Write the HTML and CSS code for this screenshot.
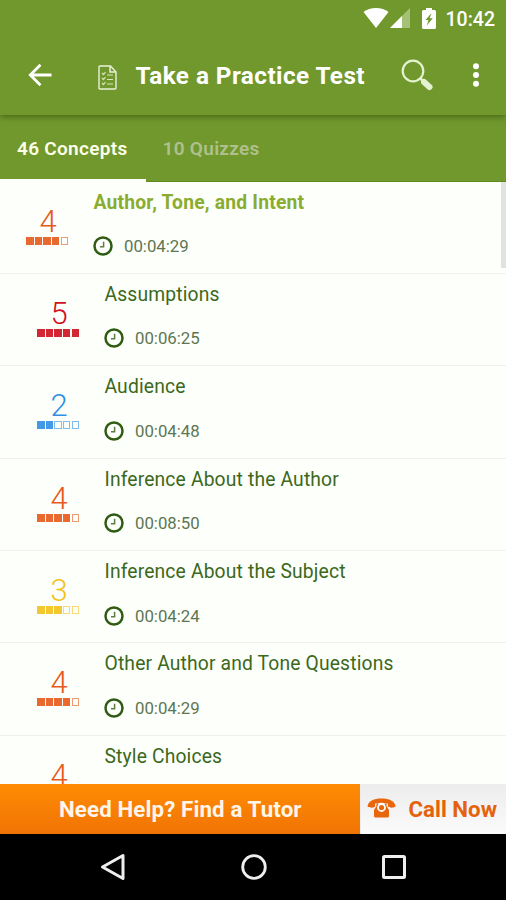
FILE: index.html
```html
<!DOCTYPE html>
<html lang="en">
<head>
<meta charset="utf-8">
<title>Take a Practice Test</title>
<link rel="stylesheet" href="styles.css">
</head>
<body>
<svg class="defs" aria-hidden="true">
  <symbol id="clock" viewBox="0 0 20 20">
    <circle cx="10" cy="10" r="8.5" fill="none" stroke="#2f5c12" stroke-width="2.5"/>
    <path d="M10.600 5.800V10.800H7" fill="none" stroke="#5d7d46" stroke-width="1.500"/>
  </symbol>
</svg>
<div class="screen">
  <header class="top">
    <div class="status">
      <svg class="wifi" viewBox="0 0 26 20" width="26" height="20"><path d="M13 20 .5 4C4 1.200 8 0 13 0s9 1.200 12.500 4z" fill="#fff"/></svg>
      <svg class="signal" viewBox="0 0 20 20" width="20" height="20"><path d="M20 0V20H0z" fill="#a5c077"/><path d="M12 8V20H0z" fill="#fff"/></svg>
      <svg class="battery" viewBox="0 0 14 21" width="14" height="21"><path d="M4 0h6v2h2.500q1.500 0 1.500 1.500v16q0 1.500-1.500 1.500h-11Q0 21 0 19.500v-16Q0 2 1.500 2H4z" fill="#fff"/><path d="M9.500 5 3.500 12h3L4.800 17.500 10.800 10.200H7.700z" fill="#71982d"/></svg>
      <span class="time">10:42</span>
    </div>
    <div class="bar">
      <svg class="back" viewBox="0 0 24 24" width="24" height="24"><path d="M12.500 1.800 2.300 12l10.200 10.200M2.500 12H23.500" fill="none" stroke="#fff" stroke-width="2.800"/></svg>
      <svg class="doc" viewBox="0 0 19 25" width="19" height="25"><path d="M1 2q0-1 1-1h10.500L18 7v16q0 1-1 1H2q-1 0-1-1z" fill="none" stroke="#e9f1d9" stroke-width="1.400"/><path d="M12 1.500V7h5.500" fill="none" stroke="#e9f1d9" stroke-width="1.500"/><path d="m4 8 1.500 1.500L7.500 7M4 13l1.500 1.500L7.500 12M4 18l1.500 1.500L7.500 17M9 10h6M9 14.500h6M9 19h6" fill="none" stroke="#d9e6bf" stroke-width="1.200"/></svg>
      <h1 class="title">Take a Practice Test</h1>
      <svg class="search" viewBox="0 0 32 32" width="32" height="32"><circle cx="12" cy="12" r="10.300" fill="none" stroke="#e4f2d0" stroke-width="2.200"/><path d="m19.500 19.500 3 3" stroke="#e4f2d0" stroke-width="2.500"/><path d="m23 23 5.500 5" stroke="#e4f2d0" stroke-width="6" stroke-linecap="round"/></svg>
      <svg class="more" viewBox="0 0 8 24" width="8" height="24"><g fill="#fff"><circle cx="4" cy="3.300" r="3"/><circle cx="4" cy="12" r="3"/><circle cx="4" cy="20.700" r="3"/></g></svg>
    </div>
  </header>
  <nav class="tabs">
    <div class="tab active"><span>46 Concepts</span></div>
    <div class="tab second"><span>10 Quizzes</span></div>
  </nav>
  <main class="list">
    <div class="scroll"></div>
    <article class="row current">
      <div class="level orange"><b>4</b><div class="boxes"><i class="on"></i><i class="on"></i><i class="on"></i><i class="on"></i><i></i></div></div>
      <div class="info"><h2>Author, Tone, and Intent</h2><p><svg><use href="#clock"/></svg><span>00:04:29</span></p></div>
    </article>
    <article class="row">
      <div class="level red"><b>5</b><div class="boxes"><i class="on"></i><i class="on"></i><i class="on"></i><i class="on"></i><i class="on"></i></div></div>
      <div class="info"><h2>Assumptions</h2><p><svg><use href="#clock"/></svg><span>00:06:25</span></p></div>
    </article>
    <article class="row">
      <div class="level blue"><b>2</b><div class="boxes"><i class="on"></i><i class="on"></i><i></i><i></i><i></i></div></div>
      <div class="info"><h2>Audience</h2><p><svg><use href="#clock"/></svg><span>00:04:48</span></p></div>
    </article>
    <article class="row">
      <div class="level orange"><b>4</b><div class="boxes"><i class="on"></i><i class="on"></i><i class="on"></i><i class="on"></i><i></i></div></div>
      <div class="info"><h2>Inference About the Author</h2><p><svg><use href="#clock"/></svg><span>00:08:50</span></p></div>
    </article>
    <article class="row">
      <div class="level yellow"><b>3</b><div class="boxes"><i class="on"></i><i class="on"></i><i class="on"></i><i></i><i></i></div></div>
      <div class="info"><h2>Inference About the Subject</h2><p><svg><use href="#clock"/></svg><span>00:04:24</span></p></div>
    </article>
    <article class="row">
      <div class="level orange"><b>4</b><div class="boxes"><i class="on"></i><i class="on"></i><i class="on"></i><i class="on"></i><i></i></div></div>
      <div class="info"><h2>Other Author and Tone Questions</h2><p><svg><use href="#clock"/></svg><span>00:04:29</span></p></div>
    </article>
    <article class="row">
      <div class="level orange"><b>4</b></div>
      <div class="info"><h2>Style Choices</h2></div>
    </article>
  </main>
  <footer class="help">
    <div class="tutor"><span>Need Help? Find a Tutor</span></div>
    <div class="call">
      <svg viewBox="0 0 29 20" width="29" height="20"><path d="M.5 8.500C1 3 7 .5 14.500.5S28 3 28.500 8.500c-2 1.500-6 1.500-7.500.3V5.800Q14.500 3.500 8 5.800v3C6.500 10 2.500 10 .5 8.500z" fill="#e8660c"/><path d="M9.500 5.500h2v2h6v-2h2v2.500l2.500 4V18q0 1.500-1.500 1.500h-12Q7 19.500 7 18v-6l2.500-4z" fill="#e8660c"/><circle cx="14.500" cy="9.500" r="3.500" fill="#e8660c" stroke="#fff" stroke-width="1.800"/></svg>
      <span>Call Now</span>
    </div>
  </footer>
  <div class="keys">
    <svg viewBox="0 0 26 28" width="26" height="28"><path d="M23 2.500v23L2.500 14z" fill="none" stroke="#eee" stroke-width="3" stroke-linejoin="round"/></svg>
    <svg viewBox="0 0 26 26" width="26" height="26"><circle cx="13" cy="13" r="11.300" fill="none" stroke="#eee" stroke-width="2.800"/></svg>
    <svg viewBox="0 0 24 24" width="24" height="24"><rect x="1.500" y="1.500" width="21" height="21" rx="1" fill="none" stroke="#eee" stroke-width="3"/></svg>
  </div>
</div>
</body>
</html>
```
FILE: styles.css
```css
* { box-sizing: border-box; }
body { margin: 0; font-family: Roboto, "Liberation Sans", sans-serif; }
h1, h2, p { margin: 0; }
svg { flex: none; display: block; }
.defs { width: 0; height: 0; position: absolute; }
.screen { width: 506px; height: 900px; overflow: hidden; display: flex; flex-direction: column; background: #fdfffb; }
.top { height: 115px; flex: none; background: #71982d; position: relative; z-index: 1; box-shadow: 0 1px 7px rgba(35, 60, 0, .65); }
.status { height: 37px; display: flex; align-items: center; padding-left: 362.500px; color: #fff; }
.wifi, .signal, .battery { margin-top: -1px; }
.signal { margin-left: 1.500px; }
.battery { margin-left: 11.500px; }
.time { margin-left: 10px; font-size: 19.500px; font-weight: 500; line-height: 38px; padding-top: 2px; white-space: nowrap; }
.bar { height: 78px; display: flex; align-items: center; padding-left: 28px; }
.back { margin-top: -2px; }
.doc { margin-left: 46px; margin-top: 3px; }
.title { margin-left: 18.500px; width: 265.500px; font-size: 24.300px; line-height: 30px; letter-spacing: .44px; font-weight: 700; color: #fff; white-space: nowrap; }
.search { margin-top: -3px; }
.more { margin-left: 38.500px; margin-top: -2px; }
.tabs { height: 66.500px; flex: none; display: flex; background: #71982d; border-bottom: 1.500px solid #5f8a1d; font-size: 19px; font-weight: 600; letter-spacing: .3px; white-space: nowrap; }
.tab { line-height: 67px; }
.active { width: 146px; height: 67px; padding-left: 17px; color: #fdffe9; border-bottom: 3px solid #fdfffb; }
.second { padding-left: 16.500px; color: #b0c08d; }
.list { flex: 1; min-height: 0; overflow: hidden; position: relative; }
.scroll { position: absolute; right: 0; top: 0; width: 5px; height: 86px; background: #dfe2df; }
.row { height: 92.400px; display: flex; padding-left: 37px; border-bottom: 1px solid #eff1ef; color: #3c681c; }
.row.current { padding-left: 26px; }
.level { width: 42px; padding-top: 22px; text-align: center; }
.level b { display: block; font-size: 31px; line-height: 36px; font-weight: 300; padding-left: 2px; }
.boxes { display: flex; justify-content: space-between; margin-top: -3px; }
.boxes i { width: 7.500px; height: 8px; border: 1px solid currentColor; opacity: .6; }
.boxes .on { background: currentColor; opacity: .9; }
.orange { color: #e65a1c; }
.red { color: #d0101f; }
.blue { color: #2f8fe4; }
.yellow { color: #f2c118; }
.info { margin-left: 25.500px; padding-top: 8px; white-space: nowrap; }
.info h2 { font-size: 19.300px; line-height: 25px; font-weight: 400; letter-spacing: .15px; }
.current h2 { color: #8aac2f; font-weight: 700; letter-spacing: .2px; }
.info p { display: flex; align-items: center; margin-top: 21.500px; font-size: 16.800px; line-height: 20px; color: #5d7652; }
.info p svg { width: 20px; height: 20px; margin-right: 11px; margin-left: -.5px; }
.help { height: 49.500px; flex: none; display: flex; font-size: 22.300px; font-weight: 700; white-space: nowrap; }
.tutor { width: 359.500px; padding-left: 59px; line-height: 50px; letter-spacing: .12px; color: #fff5ea; background: linear-gradient(#ff8b04, #f07404); }
.call { flex: 1; display: flex; align-items: center; gap: 13px; padding-left: 6px; color: #e5620c; background: linear-gradient(#ececec, #fbfbfb); border-left: 1px solid #eee; }
.call svg { margin-top: -1px; }
.keys { height: 66.500px; flex: none; display: flex; align-items: center; justify-content: space-between; padding: 0 100px; background: #000; }
```
